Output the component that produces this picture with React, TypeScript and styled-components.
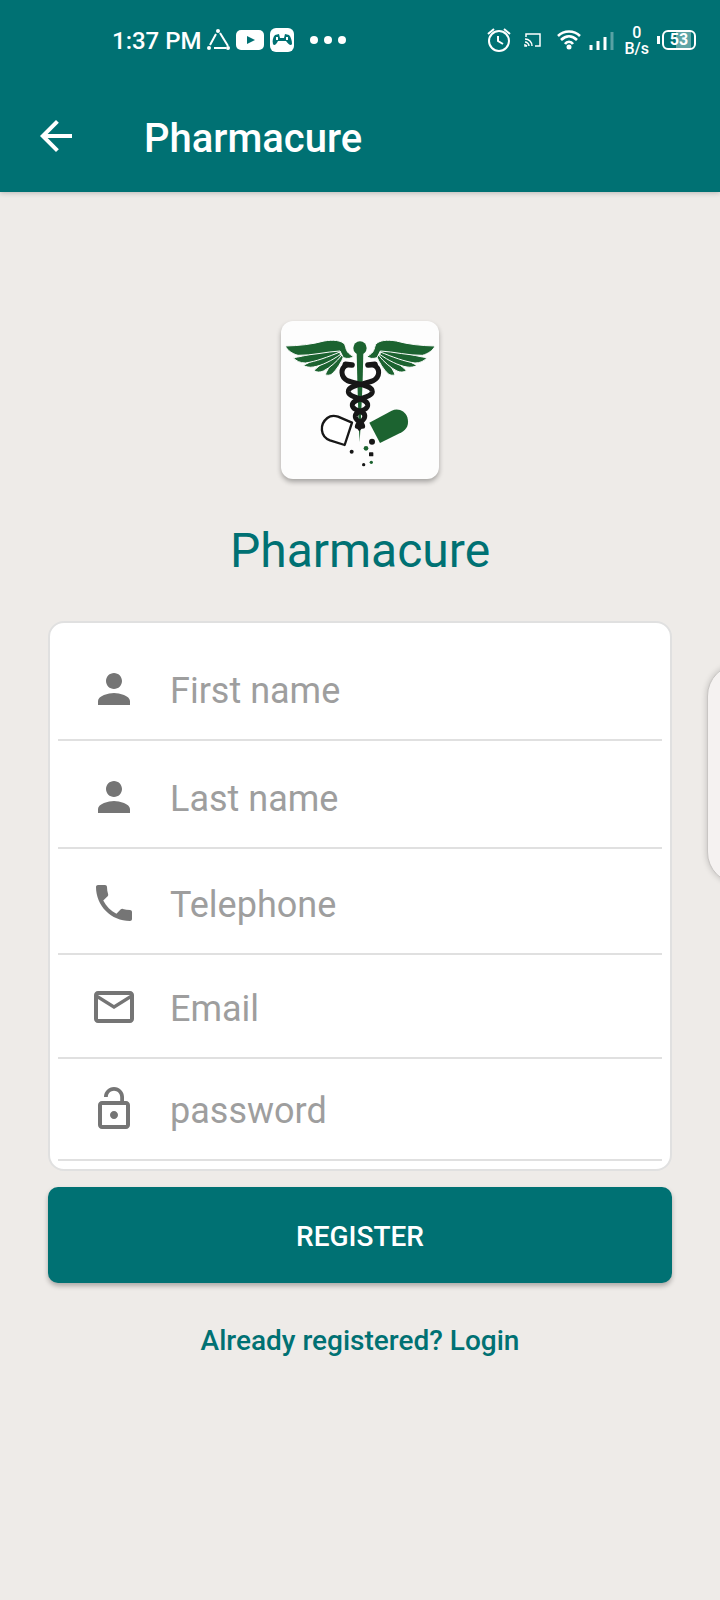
import React from "react";
import styled, { createGlobalStyle } from "styled-components";
import { MdArrowBack, MdLockOpen, MdMailOutline, MdPerson, MdPhone } from "react-icons/md";
import type { IconType } from "react-icons";

const teal = "#007173";
const line = "#e0e0e0";

const GlobalStyle = createGlobalStyle`
  * { box-sizing: border-box; }
  body {
    margin: 0;
    background: #eeebe8;
    font-family: Roboto, "Liberation Sans", sans-serif;
  }
`;

const Page = styled.div`
  min-height: 100vh;
  display: flex;
  flex-direction: column;
  overflow-x: hidden;
  position: relative;
`;

const Header = styled.header`
  background: ${teal};
  color: #fff;
  box-shadow: 0 1px 5px rgba(0, 0, 0, 0.22);
`;

const StatusBar = styled.div`
  height: 80px;
  padding: 0 24px 0 112px;
  display: flex;
  align-items: center;
  justify-content: space-between;
`;

const StatusGroup = styled.div<{ $gap: number }>`
  display: flex;
  align-items: center;
  gap: ${(p) => p.$gap}px;
  svg { display: block; flex: none; }
`;

const Clock = styled.span`
  font-size: 24px;
  line-height: 28px;
  font-weight: 500;
  padding-top: 2px;
`;

const Rate = styled.span`
  font-size: 16px;
  line-height: 16px;
  font-weight: 500;
  text-align: center;
  display: flex;
  flex-direction: column;
  padding-top: 2px;
`;

const Battery = styled.span`
  display: flex;
  align-items: center;
  gap: 2px;
  &::before {
    content: "";
    width: 3px;
    height: 8px;
    background: #fff;
  }
`;

const BatteryCase = styled.span`
  width: 34px;
  height: 20px;
  border: 2px solid #fff;
  border-radius: 6px;
  background: linear-gradient(90deg, ${teal} 0 40%, #5fa5a6 40% 90%, ${teal} 90%);
  font-size: 16px;
  line-height: 16px;
  font-weight: 700;
  text-align: center;
`;

const AppBar = styled.div`
  height: 112px;
  padding: 0 32px;
  display: flex;
  align-items: center;
  gap: 64px;
`;

const BackButton = styled.button`
  border: 0;
  padding: 0;
  background: none;
  color: inherit;
  font-size: 48px;
  display: flex;
`;

const Title = styled.h1`
  margin: 0;
  padding-top: 6px;
  font-size: 40px;
  line-height: 48px;
  font-weight: 500;
`;

const Main = styled.main`
  padding: 129px 48px 64px;
  display: flex;
  flex-direction: column;
  align-items: center;
`;

const LogoCard = styled.div`
  width: 158px;
  height: 158px;
  border-radius: 12px;
  background: #fdfdfd;
  box-shadow: 0 3px 5px rgba(0, 0, 0, 0.3);
  svg { display: block; width: 100%; height: 100%; }
`;

const Brand = styled.h2`
  margin: 40px 0 38px;
  font-size: 48px;
  line-height: 64px;
  font-weight: 400;
  color: ${teal};
`;

const Form = styled.form`
  width: 100%;
  display: flex;
  flex-direction: column;
  gap: 16px;
`;

const Fields = styled.div`
  padding: 8px;
  border: 2px solid ${line};
  border-radius: 16px;
  background: #fff;
`;

const FieldRow = styled.label<{ $space: number }>`
  padding: ${(p) => p.$space}px 32px 0;
  height: ${(p) => p.$space + 102}px;
  border-bottom: 2px solid ${line};
  display: flex;
  align-items: center;
  gap: 32px;
  color: #757575;
  svg { flex: none; font-size: 48px; }
`;

const TextBox = styled.input`
  flex: 1;
  min-width: 0;
  border: 0;
  padding: 4px 0 0;
  outline: 0;
  background: none;
  font: 400 36px/48px Roboto, "Liberation Sans", sans-serif;
  color: #212121;
  &::placeholder { color: #9e9e9e; opacity: 1; }
`;

const RegisterButton = styled.button`
  height: 96px;
  border: 0;
  border-radius: 10px;
  padding: 4px 16px 0;
  background: ${teal};
  color: #fff;
  font: 500 28px/32px Roboto, "Liberation Sans", sans-serif;
  box-shadow: 0 3px 5px rgba(0, 0, 0, 0.28);
`;

const LoginLink = styled.a`
  margin-top: 42px;
  font-size: 28px;
  line-height: 32px;
  font-weight: 500;
  color: ${teal};
  text-decoration: none;
`;

const EdgeHandle = styled.aside`
  position: absolute;
  right: -67px;
  top: 664px;
  width: 80px;
  height: 220px;
  border-radius: 32px;
  background: #f5f2f1;
  border: 1px solid #c9c6c4;
  box-shadow: 0 0 6px rgba(0, 0, 0, 0.2);
`;

const fields: { name: string; label: string; type: string; Icon: IconType; space: number }[] = [
  { name: "first", label: "First name", type: "text", Icon: MdPerson, space: 8 },
  { name: "last", label: "Last name", type: "text", Icon: MdPerson, space: 6 },
  { name: "phone", label: "Telephone", type: "tel", Icon: MdPhone, space: 4 },
  { name: "email", label: "Email", type: "email", Icon: MdMailOutline, space: 2 },
  { name: "password", label: "password", type: "password", Icon: MdLockOpen, space: 0 },
];

const Wing = () => (
  <g fill="#1c6330" stroke="#fdfdfd" strokeWidth="3">
    <path d="M164 193 C168 180 182 160 204 134 L220 136 C212 156 198 178 184 191 C178 195 170 196 164 193Z" />
    <path d="M130 181 C142 168 172 146 202 126 L212 136 C198 154 178 172 158 182 C148 187 138 186 130 181Z" />
    <path d="M98 165 C120 154 166 132 202 118 L210 132 C184 150 154 166 128 170 C116 172 106 170 98 165Z" />
    <path d="M68 142 C100 138 150 124 200 110 L210 124 C172 140 134 154 104 158 C88 158 76 152 68 142Z" />
    <path d="M44 107 C86 106 124 102 160 92 C188 87 212 90 222 102 C228 116 224 126 248 138 C242 145 230 146 218 142 L208 122 C168 124 122 136 82 135 C64 130 50 120 44 107Z" />
  </g>
);

const Logo = () => (
  <svg viewBox="31 32 474 474" role="img" aria-label="Pharmacure logo">
    <Wing />
    <g transform="translate(537 0) scale(-1 1)"><Wing /></g>
    <circle cx="268" cy="113" r="20" fill="#1c6330" />
    <path d="M258 125 H278 L276 210 L270 345 L267 395 L264 345 L260 210Z" fill="#1c6330" />
    <g fill="none" stroke="#171717" strokeLinecap="round">
      <path d="M228 164 C208 174 210 200 230 211 C258 222 306 224 305 244 C303 265 242 262 245 286 C248 306 286 298 282 320 C280 334 262 335 260 348" strokeWidth="15" />
      <path d="M309 164 C330 174 328 200 308 211 C281 222 232 224 233 244 C235 265 294 262 291 286 C288 306 252 298 254 320 C256 334 276 335 276 348" strokeWidth="15" />
      <path d="M224 162 L244 164 M313 162 L292 164" strokeWidth="17" />
      <path d="M259 346 L266 355 L276 345" strokeWidth="10" />
    </g>
    <path d="M244 337 L222 404 L178 390 C148 378 146 342 170 323 C180 315 190 315 202 319Z" fill="#fff" stroke="#171717" strokeWidth="7" strokeLinejoin="round" />
    <path d="M296 337 L363 301 C382 292 403 301 410 321 C416 342 409 356 393 366 L328 398Z" fill="#1c6330" />
    <circle cx="304" cy="394" r="9" fill="#171717" />
    <circle cx="286" cy="414" r="7" fill="#1c6330" />
    <rect x="295" y="426" width="13" height="12" rx="2" fill="#171717" />
    <circle cx="243" cy="424" r="6" fill="#171717" />
    <circle cx="279" cy="463" r="5" fill="#171717" />
    <circle cx="302" cy="456" r="5" fill="#1c6330" />
  </svg>
);

const NotificationIcons = () => (
  <svg width="142" height="28" viewBox="0 0 142 28" fill="#fff" aria-hidden="true">
    <g stroke="#fff" strokeWidth="2" fill="none">
      <path d="M10 8 L4 19 M14 7 L22 20 M8 22 H20" />
    </g>
    <circle cx="12" cy="5" r="2" /><circle cx="3" cy="22" r="2" /><circle cx="22" cy="22" r="2" />
    <rect x="30" y="4" width="28" height="20" rx="5" />
    <path d="M41 10 V18 L49 14Z" fill={teal} />
    <rect x="64" y="2" width="24" height="24" rx="6" />
    <path d="M69 9 L73 8 L74 12 H78 L79 8 L83 9 C85 11 86 15 86 18 C85 20 83 19 80 15 H72 C70 19 68 20 67 18 C66 15 67 11 69 9Z" fill={teal} />
    <path d="M71 11 V14 M81 11 V14" stroke="#fff" strokeWidth="2" />
    <circle cx="108" cy="14" r="4" /><circle cx="122" cy="14" r="4" /><circle cx="136" cy="14" r="4" />
  </svg>
);

const SystemIcons = () => (
  <svg width="130" height="28" viewBox="0 0 130 28" fill="none" stroke="#fff" strokeWidth="2" aria-hidden="true">
    <circle cx="13" cy="15" r="10" />
    <path d="M2 8 L8 3 M18 3 L24 8 M12 10 V15 L17 18" />
    <g strokeWidth="1.5">
      <path d="M40 11 V8 H54 V20 H49" />
      <path d="M39 13 C43 13 46 16 46 20 M39 16 C41 16 43 18 43 20" />
      <path d="M39 19 L41 20 H39Z" />
    </g>
    <g strokeWidth="2.6">
      <path d="M72 10 C78 4 88 4 94 10 M75 14 C80 9 86 9 91 14 M79 18 C81 15 85 15 87 18" />
    </g>
    <circle cx="83" cy="21" r="2.5" fill="#fff" stroke="none" />
    <g strokeWidth="3">
      <path d="M105 24 V19 M112 24 V15 M119 24 V11" />
      <path d="M126 24 V6" opacity="0.35" />
    </g>
  </svg>
);

export default function App() {
  return (
    <Page>
      <GlobalStyle />
      <Header>
        <StatusBar>
          <StatusGroup $gap={4}>
            <Clock>1:37 PM</Clock>
            <NotificationIcons />
          </StatusGroup>
          <StatusGroup $gap={8}>
            <SystemIcons />
            <Rate><span>0</span><span>B/s</span></Rate>
            <Battery><BatteryCase>53</BatteryCase></Battery>
          </StatusGroup>
        </StatusBar>
        <AppBar>
          <BackButton type="button" aria-label="Back"><MdArrowBack /></BackButton>
          <Title>Pharmacure</Title>
        </AppBar>
      </Header>
      <Main>
        <LogoCard><Logo /></LogoCard>
        <Brand>Pharmacure</Brand>
        <Form onSubmit={(e) => e.preventDefault()}>
          <Fields>
            {fields.map(({ name, label, type, Icon, space }) => (
              <FieldRow key={name} $space={space}>
                <Icon aria-hidden="true" />
                <TextBox name={name} type={type} placeholder={label} aria-label={label} />
              </FieldRow>
            ))}
          </Fields>
          <RegisterButton type="submit">REGISTER</RegisterButton>
        </Form>
        <LoginLink href="#login">Already registered? Login</LoginLink>
      </Main>
      <EdgeHandle />
    </Page>
  );
}
